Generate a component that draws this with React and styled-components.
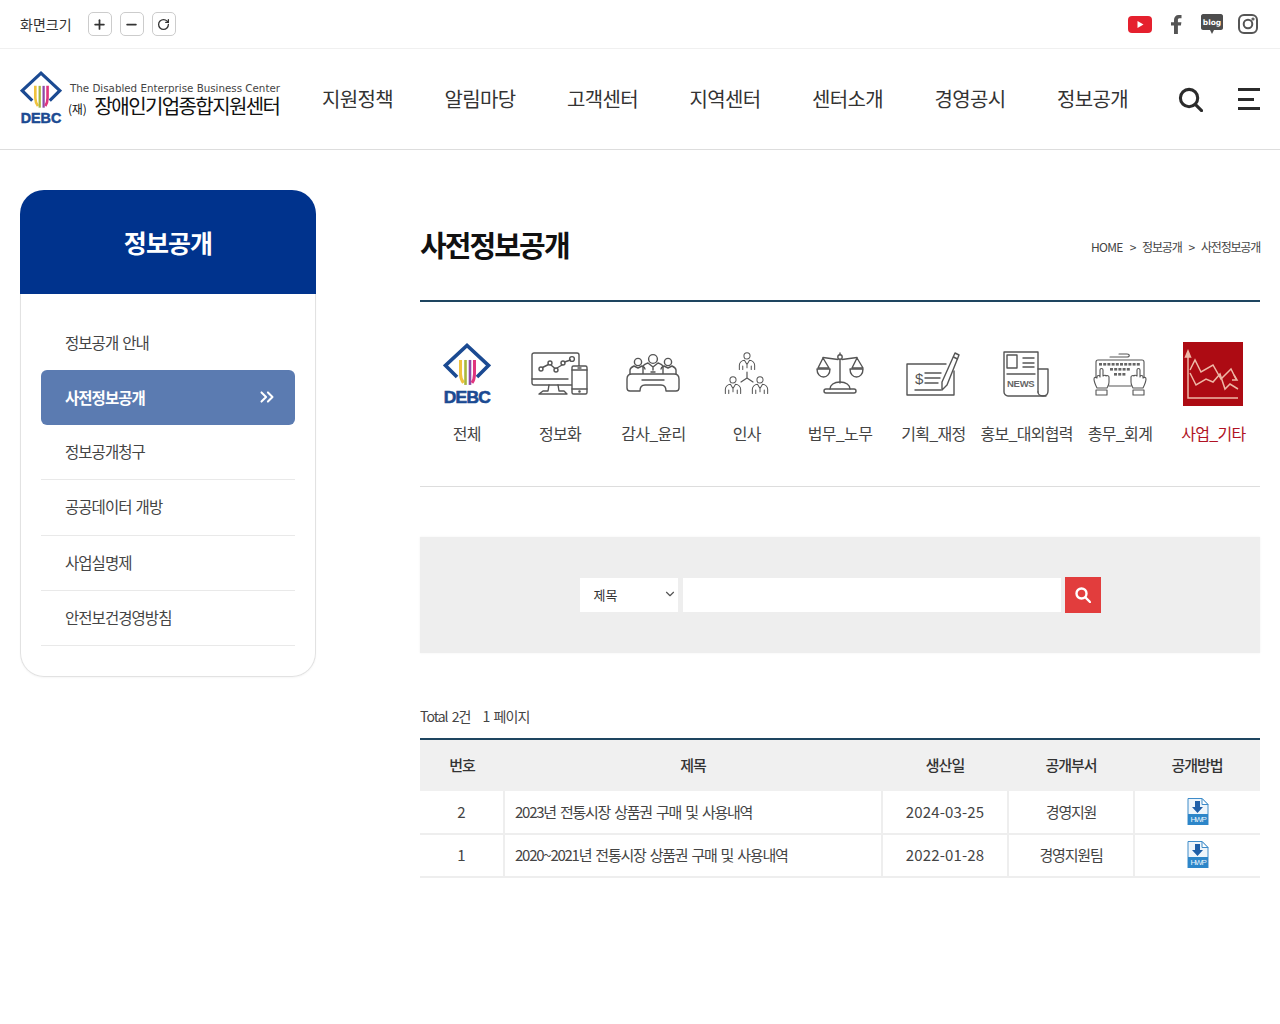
import React from 'react'
import styled, { createGlobalStyle } from 'styled-components'
import { Plus, Minus, RotateCw, ChevronsRight, ChevronDown } from 'lucide-react'

const GlobalStyle = createGlobalStyle`
  * { box-sizing: border-box; }
  html, body { margin: 0; padding: 0; background: #fff; }
  body {
    font-family: 'Noto Sans CJK KR', 'Noto Sans', sans-serif;
    color: #333;
  }
  ul { margin: 0; padding: 0; list-style: none; }
`

const Page = styled.div`
  width: 1280px;
  min-height: 1024px;
`

const TopBar = styled.div`
  height: 49px;
  border-bottom: 1px solid #f0f0f0;
  padding: 0 20px;
  display: flex;
  align-items: center;
  justify-content: space-between;
`

const ZoomGroup = styled.div`
  display: flex;
  align-items: center;
  gap: 8px;
`

const ZoomLabel = styled.span`
  font-size: 14px;
  margin-right: 8px;
  color: #333;
`

const ZoomButton = styled.button`
  width: 24px;
  height: 24px;
  padding: 0;
  display: flex;
  align-items: center;
  justify-content: center;
  background: #fff;
  border: 1px solid #ccc;
  border-radius: 5px;
  color: #333;
`

const SnsGroup = styled.div`
  display: flex;
  align-items: center;
  margin-right: -6px;
`

const SnsSlot = styled.a`
  display: flex;
  align-items: center;
  justify-content: center;
  width: 36px;
`

const Header = styled.header`
  height: 101px;
  border-bottom: 1px solid #ddd;
  padding: 0 20px;
  display: flex;
  align-items: center;
`

const Logo = styled.a`
  flex: none;
  width: 302px;
  display: flex;
  align-items: center;
  gap: 6px;
  margin-top: -1px;
`

const LogoText = styled.div`
  display: flex;
  flex-direction: column;
  margin-top: 5px;
`

const LogoEng = styled.span`
  font-family: 'DejaVu Sans', sans-serif;
  font-size: 10.3px;
  line-height: 13px;
  color: #444;
  padding-left: 2px;
  white-space: nowrap;
`

const LogoKor = styled.span`
  font-size: 20px;
  line-height: 21px;
  letter-spacing: -1.6px;
  color: #111;
  white-space: nowrap;
  small { font-size: 12px; letter-spacing: -0.2px; margin-right: 8px; }
`

const Nav = styled.ul`
  flex: none;
  display: flex;
  gap: 51.5px;
`

const NavItem = styled.li`
  font-size: 20px;
  line-height: 28px;
  letter-spacing: -0.65px;
  color: #333;
  white-space: nowrap;
`

const HeaderTools = styled.div`
  margin-left: 50px;
  display: flex;
  align-items: center;
  gap: 35px;
`

const Burger = styled.div`
  width: 22px;
  height: 22px;
  display: flex;
  flex-direction: column;
  justify-content: space-between;
  span {
    display: block;
    height: 3px;
    background: #2b2b2b;
  }
  span:nth-child(2) { width: 16px; }
`

const Body = styled.div`
  display: flex;
  padding: 40px 20px 0;
`

const Side = styled.aside`
  width: 296px;
  flex: none;
  margin-right: 104px;
`

const SideHead = styled.h2`
  margin: 0;
  height: 104px;
  background: #00338d;
  border-radius: 24px 24px 0 0;
  display: flex;
  align-items: center;
  justify-content: center;
  color: #fff;
  font-size: 25px;
  font-weight: 700;
  letter-spacing: -0.9px;
`

const SideMenu = styled.ul`
  border: 1px solid #e2e2e2;
  border-top: 0;
  border-radius: 0 0 24px 24px;
  padding: 21px 20px 30px;
  box-shadow: 0 1px 2px rgba(0, 0, 0, 0.04);
`

const SideItem = styled.li`
  height: ${(p) => (p.$active ? '55px' : '55.2px')};
  display: flex;
  align-items: center;
  justify-content: space-between;
  padding: 0 17px 2px 24px;
  font-size: 15.5px;
  letter-spacing: -0.95px;
  word-spacing: 1.5px;
  color: ${(p) => (p.$active ? '#fff' : '#444')};
  font-weight: ${(p) => (p.$active ? 700 : 400)};
  background: ${(p) => (p.$active ? '#5b7bb1' : 'transparent')};
  border-radius: ${(p) => (p.$active ? '6px' : '0')};
  border-bottom: ${(p) => (p.$active || p.$plain ? '0' : '1px solid #e9e9e9')};
`

const Main = styled.main`
  flex: 1;
  min-width: 0;
`

const TitleRow = styled.div`
  height: 112px;
  border-bottom: 2px solid #1e4560;
  display: flex;
  align-items: center;
  justify-content: space-between;
  padding-bottom: 2px;
`

const PageTitle = styled.h1`
  margin: 0;
  font-size: 29px;
  font-weight: 700;
  letter-spacing: -1.9px;
  color: #111;
`

const Crumbs = styled.div`
  margin-top: 4px;
  display: flex;
  align-items: center;
  gap: 7px;
  font-size: 12px;
  letter-spacing: -1.2px;
  color: #444;
`

const CrumbHome = styled.span`
  letter-spacing: -0.7px;
`

const CategoryGrid = styled.ul`
  display: grid;
  grid-template-columns: repeat(9, 1fr);
  height: 185px;
  padding-top: 40px;
  border-bottom: 1px solid #ddd;
`

const Category = styled.li`
  display: flex;
  flex-direction: column;
  align-items: center;
  color: ${(p) => (p.$active ? '#b01224' : '#444')};
  font-size: 16px;
  letter-spacing: -0.7px;
  white-space: nowrap;
`

const CategoryIcon = styled.div`
  height: 64px;
  display: flex;
  align-items: center;
  justify-content: center;
  margin-bottom: 15px;
`

const SearchBox = styled.form`
  margin-top: 50px;
  height: 116px;
  background: #eee;
  display: flex;
  align-items: center;
  justify-content: center;
  box-shadow: 0 0 2px rgba(0, 0, 0, 0.06);
`

const SelectBox = styled.div`
  width: 98px;
  height: 34px;
  background: #fff;
  padding: 0 1px 2px 14px;
  display: flex;
  align-items: center;
  justify-content: space-between;
  font-size: 13px;
  color: #333;
  margin-right: 5px;
`

const SearchInput = styled.input`
  width: 378px;
  height: 34px;
  border: 0;
  background: #fff;
  margin-right: 4px;
  outline: 0;
`

const SearchButton = styled.button`
  width: 36px;
  height: 36px;
  padding: 0;
  border: 0;
  background: #e23d3d;
  display: flex;
  align-items: center;
  justify-content: center;
`

const Total = styled.div`
  margin-top: 53px;
  height: 20px;
  display: flex;
  gap: 12px;
  align-items: center;
  font-size: 14px;
  letter-spacing: -0.95px;
  word-spacing: 2px;
  color: #444;
`

const Table = styled.table`
  margin-top: 12px;
  width: 100%;
  border-collapse: collapse;
  table-layout: fixed;
  border-top: 2px solid #1e4560;
`

const Th = styled.th`
  height: 52px;
  background: #f0f0f0;
  font-size: 15px;
  font-weight: 500;
  letter-spacing: -1px;
  color: #333;
  padding: 0 0 2px;
`

const Td = styled.td`
  height: 43px;
  padding: ${(p) => (p.$left ? '0 10px 2px' : '0 0 2px')};
  text-align: ${(p) => (p.$left ? 'left' : 'center')};
  font-size: 15px;
  letter-spacing: ${(p) => p.$spacing || '-1.2px'};
  word-spacing: ${(p) => (p.$left ? '2px' : '0')};
  color: #444;
  border-bottom: 2px solid #eee;
  border-left: ${(p) => (p.$first ? '0' : '2px solid #eee')};
  svg { display: block; margin: 0 auto; }
`

const Ico = ({ w = 60, h = 60, children, sw = 1.4 }) => (
  <svg width={w} height={h} viewBox={`0 0 ${w} ${h}`} fill="none" stroke="#555" strokeWidth={sw} strokeLinecap="round" strokeLinejoin="round">
    {children}
  </svg>
)

const DebcMark = ({ width }) => (
  <svg width={width} height={width * 1.31} viewBox="0 0 48 63">
    <path d="M14 34 L2.500 22.500 L24 2.500 L45.500 22.500 L34 34" fill="none" stroke="#1b4a92" strokeWidth="3.600" />
    <path d="M17.500 17v14c0 4 1.500 7 3 9" fill="none" stroke="#f0c23d" strokeWidth="3" />
    <path d="M22.500 17v25" fill="none" stroke="#a9b83c" strokeWidth="2.600" />
    <path d="M27 17v25" fill="none" stroke="#8c4aa8" strokeWidth="2.600" />
    <path d="M31.500 17v14c0 4-1 7-2.500 9" fill="none" stroke="#e0357e" strokeWidth="3" />
    <text x="24" y="60" textAnchor="middle" textLength="46.500" lengthAdjust="spacingAndGlyphs" fontFamily="'Liberation Sans', sans-serif" fontWeight="700" fontSize="17" stroke="#1b4a92" strokeWidth=".6" fill="#1b4a92">DEBC</text>
  </svg>
)

const PersonBust = ({ x, y, s = 1 }) => (
  <g transform={`translate(${x} ${y}) scale(${s})`}>
    <circle cx="0" cy="-6" r="3.600" />
    <path d="M-9 10v-5c0-3 3-6 6-6l3 5 3-5c3 0 6 3 6 6v5M-5 10v-4M5 10v-4M0 4v4" />
  </g>
)

const InfoIcon = () => (
  <Ico w={58} h={44}>
    <rect x="1" y="1" width="47" height="32" rx="2" />
    <path d="M1 27h36M18 33l-1 6h-5l-4 3h28l-3-3h-5l-1-6" />
    <circle cx="10" cy="17" r="2" />
    <circle cx="19" cy="11" r="2" />
    <circle cx="25" cy="18" r="2" />
    <circle cx="32" cy="11" r="2" />
    <circle cx="41" cy="7" r="2.400" />
    <path d="M11.500 15.500l6-3M20 13l4 3.500M26 16l5-3M33.500 10l6-2" />
    <rect x="41" y="14" width="15" height="28" rx="1.500" fill="#fff" />
    <path d="M41 18h15M41 37h15M47 16h3" />
    <circle cx="48.500" cy="39.500" r=".6" />
  </Ico>
)

const AuditIcon = () => (
  <Ico w={54} h={42}>
    <circle cx="12" cy="9" r="3.600" />
    <circle cx="42" cy="9" r="3.600" />
    <path d="M4 21v-4c0-2 2-3 4-4l4 2 4-2c2 1 3 2 3 3M50 21v-4c0-2-2-3-4-4l-4 2-4-2c-2 1-3 2-3 3" />
    <circle cx="27" cy="6" r="4.400" />
    <path d="M17 21v-7c0-3 3-3 5-4l5 4 5-4c2 1 5 1 5 4v7M27 14v3M25 19h4" />
    <path d="M6 21h42c3 0 5 2 5 5v9c0 2-1 3-3 3H40c0-4-2-6-5-6H19c-3 0-5 2-5 6H4c-2 0-3-1-3-3v-9c0-3 2-5 5-5z" fill="#fff" />
    <path d="M16 27h22" />
  </Ico>
)

const HrIcon = () => (
  <Ico w={46} h={44} sw={1.2}>
    <PersonBust x={23} y={9} s={0.85} />
    <PersonBust x={9} y={33} s={0.85} />
    <PersonBust x={36} y={33} s={0.85} />
    <path d="M23 20v6M23 26l-6 4M23 26l6 4" />
  </Ico>
)

const LawIcon = () => (
  <Ico w={48} h={44}>
    <circle cx="24" cy="5" r="2.200" />
    <path d="M24 1v1.500M24 7.500V31M22 7.500L7 5.500M26 7.500l15-2" />
    <path d="M7 6L2 16h11zM41 6l-5 10h11z" />
    <path d="M1 17h13c0 5-3 8-6.500 8S1 22 1 17zM34 17h13c0 5-3 8-6.500 8S34 22 34 17z" />
    <path d="M14 37c0-4 4-7 10-7s10 3 10 7" />
    <rect x="8" y="37" width="32" height="4" rx="2" />
  </Ico>
)

const PlanIcon = () => (
  <Ico w={54} h={46}>
    <path d="M40 13H1v31h47V20" />
    <path d="M9 39h26M19 22h16M19 27h15M19 32h13" />
    <path d="M49 2l4 2-12 30-5 5 0-8z" fill="#fff" />
    <path d="M47.500 6l4 2" />
    <text x="9" y="33" fontFamily="'Liberation Sans', sans-serif" fontSize="15" fill="#555" stroke="none">$</text>
  </Ico>
)

const NewsIcon = () => (
  <Ico w={48} h={46}>
    <path d="M35 41V1H1v40c0 2 2 4 4 4h38" />
    <path d="M35 18h10v22c0 3-2 5-5 5s-5-2-5-4" />
    <rect x="4" y="4" width="10" height="13" />
    <path d="M20 7h11M20 12h11M20 16h11M4 23h28" />
    <text x="4" y="36" textLength="27" lengthAdjust="spacing" fontFamily="'Liberation Sans', sans-serif" fontWeight="700" fontSize="9.500" fill="#666" stroke="none">NEWS</text>
  </Ico>
)

const KeyHand = () => (
  <>
    <path d="M4 36C2 32 1 30 1 27c0-2 2-2 3-1v-1c0-2 3-2 3 0v-7c0-2 3-2 3 0v6c1-1 3-1 3 0 1-1 3 0 3 1v5c0 3-1 4-2 6z" fill="#fff" />
    <path d="M3 38h11v5H3z" />
  </>
)

const KeyboardIcon = () => (
  <Ico w={54} h={44} sw={1.1}>
    <path d="M17 5h17c3 0 3-3 0-3h-8" />
    <path d="M3 28V10c0-1 1-2 2-2h44c1 0 2 1 2 2v18M16 34h22" />
    <g fill="#666" stroke="none">
      {[...Array(10)].map((_, i) => <rect key={i} x={6 + i * 4.2} y="11" width="3" height="2.600" />)}
      {[...Array(5)].map((_, i) => <rect key={i} x={17 + i * 4.2} y="16" width="3" height="2.600" />)}
      {[...Array(3)].map((_, i) => <rect key={i} x={21 + i * 4.2} y="21" width="3" height="2.600" />)}
    </g>
    <KeyHand />
    <g transform="translate(54 0) scale(-1 1)"><KeyHand /></g>
  </Ico>
)

const TrendIcon = () => (
  <svg width="60" height="64" viewBox="0 0 60 64">
    <rect width="60" height="64" fill="#ad0b13" />
    <g fill="none" stroke="#eeb8a6" strokeWidth="1.500">
      <path d="M5 12v44h50" />
      <path d="M2.500 15L5 9l2.500 6z" fill="#eeb8a6" />
      <path d="M7 28l5-10 6 12 12-7 8 14 10-10 5 10" />
      <path d="M7 31l6 12 10-6 7 3 7-8 5 15 5-5 8 5" />
      <path d="M51 33l3 5-5 0" />
    </g>
  </svg>
)

const HwpIcon = () => (
  <svg width="22" height="27" viewBox="0 0 22 27">
    <path d="M1 .500h14l6 6V27H1z" fill="#eef5fb" stroke="#3f8cc9" strokeWidth="1" />
    <path d="M15 .500v6h6z" fill="#fff" stroke="#3f8cc9" strokeWidth="1" />
    <path d="M8 3h5v6h3l-5.500 6L5 9h3z" fill="#1f5fa8" />
    <rect x="1" y="16" width="20" height="11" fill="#2d86c9" />
    <text x="11" y="24" textAnchor="middle" fontFamily="'Liberation Sans', sans-serif" fontSize="8" fill="#e8f3fb">HWP</text>
  </svg>
)

const categories = [
  { label: '전체', icon: <DebcMark width={48} /> },
  { label: '정보화', icon: <InfoIcon /> },
  { label: '감사_윤리', icon: <AuditIcon /> },
  { label: '인사', icon: <HrIcon /> },
  { label: '법무_노무', icon: <LawIcon /> },
  { label: '기획_재정', icon: <PlanIcon /> },
  { label: '홍보_대외협력', icon: <NewsIcon /> },
  { label: '총무_회계', icon: <KeyboardIcon /> },
  { label: '사업_기타', icon: <TrendIcon />, active: true },
]

const menu = ['정보공개 안내', '사전정보공개', '정보공개청구', '공공데이터 개방', '사업실명제', '안전보건경영방침']

const rows = [
  { no: 2, title: '2023년 전통시장 상품권 구매 및 사용내역', date: '2024-03-25', dept: '경영지원' },
  { no: 1, title: '2020~2021년 전통시장 상품권 구매 및 사용내역', date: '2022-01-28', dept: '경영지원팀' },
]

export default function App() {
  return (
    <Page>
      <GlobalStyle />
      <TopBar>
        <ZoomGroup>
          <ZoomLabel>화면크기</ZoomLabel>
          <ZoomButton><Plus size={15} strokeWidth={2.8} /></ZoomButton>
          <ZoomButton><Minus size={15} strokeWidth={2.8} /></ZoomButton>
          <ZoomButton><RotateCw size={13} strokeWidth={2.4} /></ZoomButton>
        </ZoomGroup>
        <SnsGroup>
          <SnsSlot>
            <svg width="24" height="17" viewBox="0 0 24 17">
              <rect width="24" height="17" rx="4" fill="#e5202e" />
              <path d="M9.500 5l6 3.500-6 3.500z" fill="#fff" />
            </svg>
          </SnsSlot>
          <SnsSlot>
            <svg width="11" height="19" viewBox="0 0 11 19">
              <path d="M3 19V10.500H0V7.300h3V5c0-3 1.800-5 4.600-5H10.500v3.200H8.500C7.300 3.200 6.900 3.900 6.900 5v2.300h3.500l-.5 3.200h-3V19z" fill="#555" />
            </svg>
          </SnsSlot>
          <SnsSlot>
            <svg width="22" height="21" viewBox="0 0 22 21">
              <path d="M2 0h18c1 0 2 1 2 2v12c0 1-1 2-2 2h-7l-2 4-2-4H2c-1 0-2-1-2-2V2C0 1 1 0 2 0z" fill="#4d4d4d" />
              <text x="11" y="10.500" textAnchor="middle" fontFamily="'DejaVu Sans', sans-serif" fontWeight="700" fontSize="7.500" fill="#fff">blog</text>
            </svg>
          </SnsSlot>
          <SnsSlot>
            <svg width="20" height="20" viewBox="0 0 20 20" fill="none" stroke="#555" strokeWidth="2">
              <rect x="1" y="1" width="18" height="18" rx="5" />
              <circle cx="10" cy="10" r="4.300" />
              <circle cx="15" cy="5" r=".6" fill="#555" />
            </svg>
          </SnsSlot>
        </SnsGroup>
      </TopBar>

      <Header>
        <Logo>
          <DebcMark width={42} />
          <LogoText>
            <LogoEng>The Disabled Enterprise Business Center</LogoEng>
            <LogoKor><small>(재)</small>장애인기업종합지원센터</LogoKor>
          </LogoText>
        </Logo>
        <Nav>
          {['지원정책', '알림마당', '고객센터', '지역센터', '센터소개', '경영공시', '정보공개'].map((item) => (
            <NavItem key={item}>{item}</NavItem>
          ))}
        </Nav>
        <HeaderTools>
          <svg width="25" height="25" viewBox="0 0 26 26" fill="none" stroke="#2b2b2b" strokeWidth="3.200">
            <circle cx="11.500" cy="11.500" r="9" />
            <path d="M18 18l6.500 6.500" strokeLinecap="round" />
          </svg>
          <Burger><span /><span /><span /></Burger>
        </HeaderTools>
      </Header>

      <Body>
        <Side>
          <SideHead>정보공개</SideHead>
          <SideMenu>
            {menu.map((item, i) => (
              <SideItem key={item} $active={i === 1} $plain={i === 0}>
                {item}
                {i === 1 && <ChevronsRight size={22} strokeWidth={2.2} />}
              </SideItem>
            ))}
          </SideMenu>
        </Side>

        <Main>
          <TitleRow>
            <PageTitle>사전정보공개</PageTitle>
            <Crumbs>
              <CrumbHome>HOME</CrumbHome><span>&gt;</span><span>정보공개</span><span>&gt;</span><span>사전정보공개</span>
            </Crumbs>
          </TitleRow>

          <CategoryGrid>
            {categories.map((c) => (
              <Category key={c.label} $active={c.active}>
                <CategoryIcon>{c.icon}</CategoryIcon>
                {c.label}
              </Category>
            ))}
          </CategoryGrid>

          <SearchBox>
            <SelectBox>제목<ChevronDown size={14} color="#555" /></SelectBox>
            <SearchInput />
            <SearchButton type="button">
              <svg width="16" height="16" viewBox="0 0 16 16" fill="none" stroke="#fff" strokeWidth="2.400">
                <circle cx="6.500" cy="6.500" r="5" />
                <path d="M10.500 10.500L15 15" strokeLinecap="round" />
              </svg>
            </SearchButton>
          </SearchBox>

          <Total><span>Total 2건</span><span>1 페이지</span></Total>

          <Table>
            <colgroup>
              <col style={{ width: 84 }} />
              <col style={{ width: 378 }} />
              <col style={{ width: 126 }} />
              <col style={{ width: 126 }} />
              <col style={{ width: 126 }} />
            </colgroup>
            <thead>
              <tr>
                <Th>번호</Th><Th>제목</Th><Th>생산일</Th><Th>공개부서</Th><Th>공개방법</Th>
              </tr>
            </thead>
            <tbody>
              {rows.map((r) => (
                <tr key={r.no}>
                  <Td $first $spacing="0">{r.no}</Td>
                  <Td $left $spacing="-1.25px">{r.title}</Td>
                  <Td $spacing="0.15px">{r.date}</Td>
                  <Td>{r.dept}</Td>
                  <Td><HwpIcon /></Td>
                </tr>
              ))}
            </tbody>
          </Table>
        </Main>
      </Body>
    </Page>
  )
}
